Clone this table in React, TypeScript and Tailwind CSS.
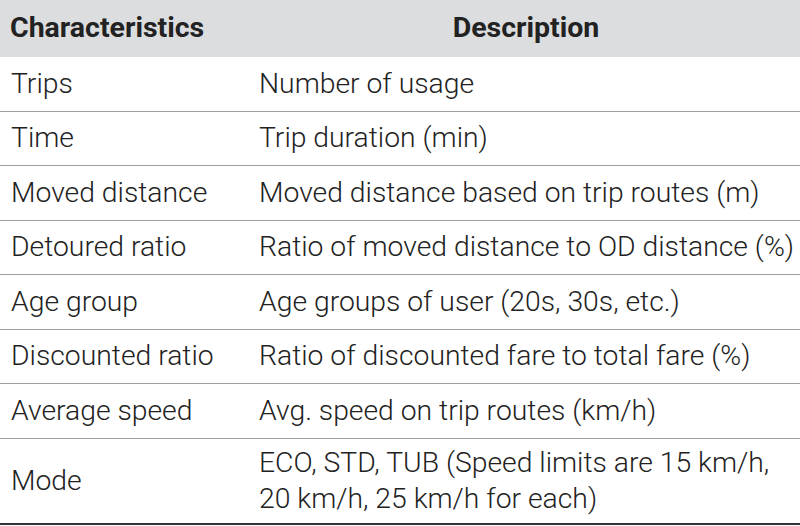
import React from "react";

const rows: [string, string[]][] = [
  ["Trips", ["Number of usage"]],
  ["Time", ["Trip duration (min)"]],
  ["Moved distance", ["Moved distance based on trip routes (m)"]],
  ["Detoured ratio", ["Ratio of moved distance to OD distance (%)"]],
  ["Age group", ["Age groups of user (20s, 30s, etc.)"]],
  ["Discounted ratio", ["Ratio of discounted fare to total fare (%)"]],
  ["Average speed", ["Avg. speed on trip routes (km/h)"]],
];

export default function App() {
  return (
    <div className="w-[800px] h-[526px] bg-white text-[#222222]" style={{ fontFamily: "Roboto, sans-serif" }}>
      <div className="flex h-[57px] bg-[#dcdddf] items-center text-[28.5px] font-bold">
        <div className="w-[248px] pl-[10px]">Characteristics</div>
        <div className="flex-1 text-center pl-[4px]">Description</div>
      </div>
      {rows.map(([k, v]) => (
        <div key={k} className="flex h-[54.5px] items-center border-b border-[#a0a0a0] text-[28.3px] font-light">
          <div className="w-[248px] pl-[11px]">{k}</div>
          <div className="flex-1 pl-[11px]">{v}</div>
        </div>
      ))}
      <div className="flex h-[86px] items-center border-b-2 border-[#333333] text-[28.3px] font-light leading-[36px]">
        <div className="w-[248px] pl-[11px]">Mode</div>
        <div className="flex-1 pl-[11px]">
          <div>ECO, STD, TUB (Speed limits are 15 km/h,</div>
          <div>20 km/h, 25 km/h for each)</div>
        </div>
      </div>
    </div>
  );
}
